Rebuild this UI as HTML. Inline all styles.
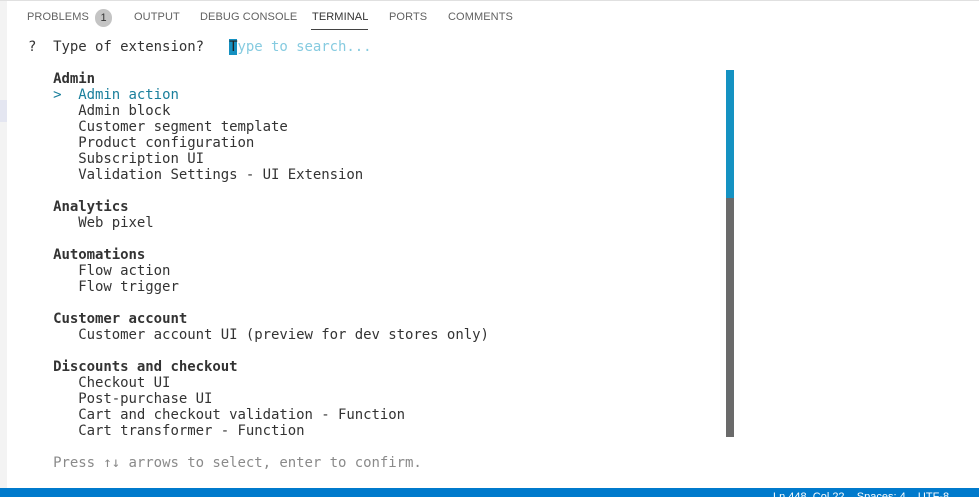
<!DOCTYPE html>
<html><head><style>
body{margin:0;width:979px;height:497px;background:#fff;position:relative;overflow:hidden;font-family:"DejaVu Sans Mono","Liberation Mono",monospace;}
.strip{position:absolute;left:0;top:0;width:7px;height:488px;background:#f3f3f3;}
.hl{position:absolute;left:0;top:100px;width:7px;height:22px;background:#e4e6f1;}
.topline{position:absolute;left:0;top:0;width:979px;height:1px;background:#e0e0e0;}
.tab{position:absolute;top:11px;font:11px "Liberation Sans",sans-serif;color:#616161;letter-spacing:0.1px}
.badge{position:absolute;left:95px;top:9px;width:17px;height:18px;border-radius:9px;background:#c4c4c4;color:#333;font:11px "Liberation Sans",sans-serif;text-align:center;line-height:18px}
.ul{position:absolute;left:311px;top:29px;width:57px;height:1px;background:#424242}
.term{position:absolute;left:28px;top:39px;font-size:14px;line-height:16px;color:#333;white-space:pre;letter-spacing:-0.05px}
.b{font-weight:bold}
.c{color:#1a7f9c}
.p{color:#86cbe0}
.cur{background:#1590c0;color:#222}
.g{color:#8a8a8a}
.sb1{position:absolute;left:726px;top:70px;width:8px;height:128px;background:#1592c2}
.sb2{position:absolute;left:726px;top:198px;width:8px;height:239px;background:#6a6a6a}
.status{position:absolute;left:0;top:488px;width:979px;height:9px;background:#007acc;color:#fff;font:11px "Liberation Sans",sans-serif}
</style></head><body>
<div class="strip"></div><div class="hl"></div><div class="topline"></div>
<div class="tab" style="left:27px">PROBLEMS</div>
<div class="badge">1</div>
<div class="tab" style="left:134px">OUTPUT</div>
<div class="tab" style="left:200px">DEBUG CONSOLE</div>
<div class="tab" style="left:312px;color:#333">TERMINAL</div>
<div class="tab" style="left:389px">PORTS</div>
<div class="tab" style="left:448px">COMMENTS</div>
<div class="ul"></div>
<div class="term">?  Type of extension?   <span class="cur">T</span><span class="p">ype to search...</span>

   <span class="b">Admin</span>
   <span class="c">&gt;  Admin action</span>
      Admin block
      Customer segment template
      Product configuration
      Subscription UI
      Validation Settings - UI Extension

   <span class="b">Analytics</span>
      Web pixel

   <span class="b">Automations</span>
      Flow action
      Flow trigger

   <span class="b">Customer account</span>
      Customer account UI (preview for dev stores only)

   <span class="b">Discounts and checkout</span>
      Checkout UI
      Post-purchase UI
      Cart and checkout validation - Function
      Cart transformer - Function

   <span class="g">Press ↑↓ arrows to select, enter to confirm.</span></div>
<div class="sb1"></div><div class="sb2"></div>
<div class="status"><span style="position:absolute;left:773px;top:3px">Ln 448, Col 22 &nbsp;&nbsp; Spaces: 4 &nbsp;&nbsp; UTF-8</span></div>
</body></html>
